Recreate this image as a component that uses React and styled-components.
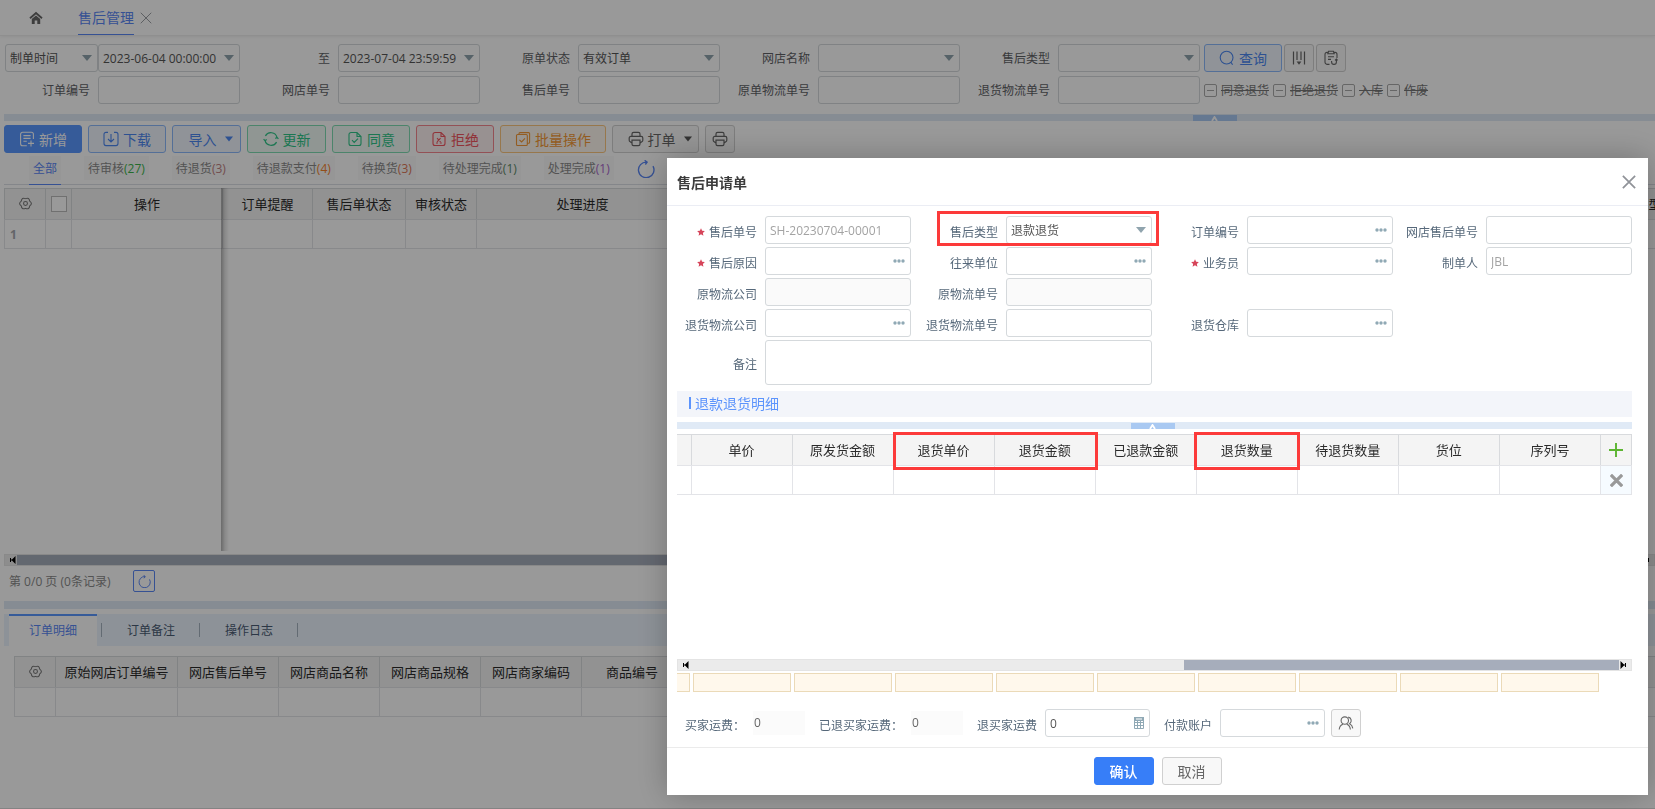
import React from 'react'
import styled, { createGlobalStyle, css } from 'styled-components'

const GlobalStyle = createGlobalStyle`
	* {
		box-sizing: border-box;
	}
	body {
		margin: 0;
		background: #fff;
		overflow: hidden;
	}
	body, button, input, select, textarea {
		font-family: 'Open Sans', 'Noto Sans CJK SC', sans-serif;
		font-size: 12px;
		color: #606266;
	}
	button {
		cursor: pointer;
	}
`

/* ---------- icons ---------- */

const Stroke = ({ size = 16, width = 1.1, children }) => (
  <svg width={size} height={size} viewBox='0 0 16 16' fill='none' stroke='currentColor' strokeWidth={width} aria-hidden='true'>
    {children}
  </svg>
)

const HomeIcon = () => (
  <svg width='14' height='14' viewBox='0 0 14 14' fill='none' aria-hidden='true'>
    <path d='M1 7.2L7 2l6 5.2' stroke='currentColor' strokeWidth='1.8' />
    <path d='M2.8 8L7 4.4 11.2 8v5H8.3V9.6H5.7V13H2.8z' fill='currentColor' />
  </svg>
)

const CloseIcon = ({ size = 12, width = 1.2 }) => (
  <Stroke size={size} width={width}><path d='M1 1l14 14M15 1L1 15' /></Stroke>
)

const AddIcon = () => (
  <Stroke>
    <path d='M14.4 8V3.2a2 2 0 0 0-2-2H3.6a2 2 0 0 0-2 2v9.6a2 2 0 0 0 2 2h4.2M4.4 4.6h7.2M4.4 7.4h7.2M4.4 10.2h3.4M12 9.4v6M9 12.4h6' />
  </Stroke>
)

const DownloadIcon = () => (
  <Stroke>
    <path d='M5 1.4H3a2 2 0 0 0-2 2v9.2a2 2 0 0 0 2 2h10a2 2 0 0 0 2-2V3.4a2 2 0 0 0-2-2h-2M8 3v8M5 8l3 3 3-3' />
  </Stroke>
)

const RenewIcon = () => (
  <Stroke width={1.2}>
    <path d='M2 9.5a6.3 6.3 0 0 0 11.6 1.6M14 6.5A6.3 6.3 0 0 0 2.4 4.9M.6 8.2L2 9.7l1.7-1.2M15.4 7.8L14 6.3l-1.7 1.2' />
  </Stroke>
)

const AgreeIcon = () => (
  <Stroke>
    <path d='M10 1.5H4a2 2 0 0 0-2 2v9a2 2 0 0 0 2 2h8a2 2 0 0 0 2-2v-7zM10 1.5v4h4M5 9.2l2.2 2.2L11 7.6' />
  </Stroke>
)

const RejectIcon = () => (
  <Stroke>
    <path d='M10 1.5H4a2 2 0 0 0-2 2v9a2 2 0 0 0 2 2h8a2 2 0 0 0 2-2v-7zM10 1.5v4h4M6 7.2l3.6 3.6M9.6 7.2L6 10.800M5 12h2M8.800 12h2' />
  </Stroke>
)

const BatchIcon = () => (
  <Stroke>
    <path d='M1.5 4.5a1 1 0 0 1 1-1h8.8a1 1 0 0 1 1 1v9a1 1 0 0 1-1 1H2.5a1 1 0 0 1-1-1zM4 3.5V2.6a1 1 0 0 1 1-1h8.6a1 1 0 0 1 1 1v8.6a1 1 0 0 1-1 1h-1.3M4.4 8.8l2.2 2.2L10 7.4' />
  </Stroke>
)

const PrintIcon = () => (
  <Stroke width={1.2}>
    <path d='M4 5.4V3a1.6 1.6 0 0 1 1.6-1.6h4.8A1.6 1.6 0 0 1 12 3v2.4M4 12l-1.800-1.200a2 2 0 0 1-1-1.600V7a1.600 1.600 0 0 1 1.600-1.600h10.400A1.600 1.600 0 0 1 14.800 7v2.200a2 2 0 0 1-1 1.600L12 12M4 9.200h8V13a1.600 1.600 0 0 1-1.600 1.600H5.600A1.600 1.600 0 0 1 4 13z' />
  </Stroke>
)

const SearchIcon = () => (
  <Stroke>
    <circle cx='7.6' cy='7.6' r='6.4' />
    <path d='M12 12.4l1.600 2.400' />
  </Stroke>
)

const ColumnsIcon = () => (
  <Stroke width={1.2}>
    <path d='M2.5 1.5v13M6 1.5V10M10 1.5V10M13.5 1.5v13' />
    <path d='M5.6 11.5h4.8L8 14.8z' fill='currentColor' stroke='none' />
  </Stroke>
)

const ClipboardIcon = () => (
  <Stroke>
    <path d='M5 2.4H4a2 2 0 0 0-2 2V12a2.400 2.400 0 0 0 2.400 2.400H6.500M11 2.400h1a2 2 0 0 1 2 2V8M5.600 1.300h4.800l.8 2.500H4.800zM5 6.800h6M5 9.400h3M13.400 9v3a2.400 2.400 0 0 1-4.800 0M8.600 12v-1M12 10.400L13.400 9l1.200 1.400' />
  </Stroke>
)

const ReloadIcon = ({ size = 16 }) => (
  <Stroke size={size} width={1.2}>
    <path d='M14.2 5.4A6.9 6.9 0 1 1 8.6 1.9M6.8.2l2.200 1.700L7.400 4' />
  </Stroke>
)

const GearIcon = () => (
  <Stroke size={13} width={1.3}>
    <path d='M13.2 5Q17.3 8 13.2 11 12.6 16 8 14 3.4 16 2.8 11-1.300 8 2.800 5 3.400 0 8 2 12.600 0 13.200 5z' />
    <circle cx='8' cy='8' r='2.4' />
  </Stroke>
)

const StarIcon = () => (
  <svg width='8' height='8' viewBox='0 0 16 16' aria-hidden='true'>
    <path fill='#d6455a' d='M8 .5l2.300 5 5.400.6-4 3.700 1.100 5.500L8 12.600l-4.800 2.700 1.100-5.500-4-3.700 5.400-.6z' />
  </svg>
)

const Triangle = ({ color = '#90a4ae', width = 10 }) => (
  <svg width={width} height='6' viewBox='0 0 10 6' aria-hidden='true'>
    <path fill={color} d='M0 0h10L5 6z' />
  </svg>
)

const DotsIcon = () => (
  <svg width='12' height='4' viewBox='0 0 12 4' fill='#90a9b5' aria-hidden='true'>
    <circle cx='2' cy='2' r='1.7' />
    <circle cx='6' cy='2' r='1.7' />
    <circle cx='10' cy='2' r='1.7' />
  </svg>
)

const CalcIcon = () => (
  <svg width='10' height='12' viewBox='0 0 10 12' fill='none' stroke='#90a9b5' aria-hidden='true'>
    <path d='M.5.5h9v11h-9zM.5 5.500h9M.5 8.500h9M3.500 4v7.500M6.500 4v7.500' />
    <path d='M0 0h10v4H0z' fill='#90a9b5' stroke='none' />
    <path d='M2 2h6' stroke='#fff' />
  </svg>
)

const UsersIcon = () => (
  <Stroke>
    <circle cx='6.8' cy='5.6' r='3.7' />
    <path d='M1.2 14.5c.3-3 2-4.600 3.700-5.200M8.800 9.300c1.700.6 3.300 2.200 3.600 5.200M10.200 2.100a3.700 3.700 0 0 1 1.400 6.700c1.800.8 2.900 2.600 3.200 4.600' />
  </Stroke>
)

const ArrowIcon = () => (
  <svg width='7' height='8' viewBox='0 0 7 8' aria-hidden='true'>
    <path d='M6.500 0v8L3 4.500H2V6H1V2h1v1.500h1z' fill='#000' />
  </svg>
)

const CaretUp = () => (
  <svg width='7' height='5' viewBox='0 0 7 5' fill='none' stroke='#fff' strokeWidth='1.8' aria-hidden='true'>
    <path d='M1 5l2.500-4L6 5' />
  </svg>
)

/* ---------- shared parts ---------- */

const controlStyle = css`
	display: block;
	width: 100%;
	height: 28px;
	padding: 0 4px;
	border: 1px solid #d5d9dc;
	border-radius: 3px;
	background: ${p => (p.$muted ? '#fafafa' : '#fff')};
	color: ${p => (p.readOnly ? '#a3a3a3' : '#555')};
	outline: none;
	appearance: none;
`

const Input = styled.input`
	${controlStyle}
`

const Select = styled.select`
	${controlStyle}
`

const TextArea = styled.textarea`
	${controlStyle}
	height: 45px;
	resize: none;
`

const Control = styled.div`
	position: relative;
	flex: none;
	width: ${p => p.$width || 146}px;
`

const Trailing = styled.span`
	position: absolute;
	top: 0;
	right: 6px;
	display: flex;
	align-items: center;
	height: 28px;
	pointer-events: none;
`

const Label = styled.label`
	display: flex;
	flex: 1;
	align-items: center;
	justify-content: flex-end;
	gap: 4px;
	padding: 3px 8px 0 0;
	white-space: nowrap;
	color: #56687a;
`

const FieldBox = styled.div`
	display: flex;
	min-width: 0;
`

const icons = { select: <Triangle />, date: <Triangle />, dots: <DotsIcon />, calc: <CalcIcon /> }

const FieldControl = ({ id, kind, value = '', width, muted, readOnly, label }) => (
  <Control $width={width}>
    {kind === 'select' ? (
      <Select id={id} aria-label={label} defaultValue={value}>
        <option>{value}</option>
      </Select>
    ) : (
      <Input id={id} aria-label={label} defaultValue={value} $muted={muted} readOnly={readOnly} />
    )}
    {icons[kind] && <Trailing>{icons[kind]}</Trailing>}
  </Control>
)

const Field = ({ id, label, required, ...rest }) => (
  <FieldBox>
    <Label htmlFor={id}>
      {required && <StarIcon />}
      {label}
    </Label>
    <FieldControl id={id} {...rest} />
  </FieldBox>
)

const tones = {
  solid: ['#fff', '#5a98ff', '#5a98ff'],
  blue: ['#4c87f2', '#8cbafc', '#f1f6fd'],
  green: ['#2fc689', '#7fdcb3', '#f0faf5'],
  red: ['#f25560', '#f58790', '#fdf2f2'],
  orange: ['#f59a37', '#fcc67f', '#fff9f0'],
  plain: ['#666', '#d0d0d0', '#f8f8f8'],
  primary: ['#fff', '#377ef8', '#377ef8']
}

const Button = styled.button`
	display: inline-flex;
	flex: none;
	align-items: center;
	justify-content: center;
	gap: 4px;
	width: ${p => p.$width}px;
	height: 28px;
	padding: 0 0 0 ${p => (p.$menu ? 8 : 0)}px;
	border: 1px solid ${p => tones[p.$tone][1]};
	border-radius: 3px;
	background: ${p => tones[p.$tone][2]};
	color: ${p => tones[p.$tone][0]};
	font-size: 14px;
	white-space: nowrap;
	font-weight: ${p => (p.$strong ? 500 : 400)};
`

const DropMark = styled.span`
	display: flex;
	margin-left: 4px;
`

const IconButton = styled.button`
	display: flex;
	align-items: center;
	justify-content: center;
	padding: 0;
	border: 0;
	background: none;
	color: ${p => p.$color || '#909399'};
`

const Splitter = styled.div`
	flex: none;
	height: ${p => p.$height || 7}px;
	margin-left: ${p => p.$inset || 0}px;
	padding-top: 1px;
	background: #e0eaf6;
`

const SplitHandle = styled.button`
	display: flex;
	align-items: flex-end;
	justify-content: center;
	width: 44px;
	height: 6px;
	margin-left: ${p => p.$at}%;
	padding: 0;
	border: 0;
	background: #a9c9f2;
`

const DataTable = styled.table`
	width: ${p => p.$width || '100%'};
	border-collapse: collapse;
	table-layout: fixed;
	th, td {
		padding: 0;
		border: 1px solid #e3e4e8;
		white-space: nowrap;
		overflow: hidden;
	}
	th {
		height: 31px;
		padding-bottom: 1px;
		border-color: #d8dadd;
		border-bottom-color: #e3e4e8;
		background: #f4f4f4;
		color: #2b2b2b;
		font-size: 13px;
		font-weight: 400;
	}
	th > *, td > * {
		margin: 0 auto;
	}
	th > svg {
		display: block;
		color: #777;
	}
	td {
		height: 29px;
	}
	.row-number {
		padding-left: 5px;
		color: #a5a8ad;
		font-weight: 700;
	}
	tr > :first-child {
		${p => p.$openLeft && 'border-left: 0;'}
	}
	.tool {
		background: #f6fbff;
	}
`

const ScrollTrack = styled.div`
	display: flex;
	flex: none;
	align-items: center;
	justify-content: space-between;
	height: 12px;
	margin-left: ${p => p.$inset || 0}px;
	padding: 1px 4px;
	background: #ebebeb;
	border: 1px solid #e4e4e4;
	overflow: hidden;
	svg {
		flex: none;
	}
	svg:last-child {
		transform: scaleX(-1);
	}
`

const ScrollThumb = styled.div`
	flex: none;
	width: ${p => p.$width};
	height: 10px;
	margin: ${p => (p.$start ? '0 auto 0 1px' : '0 1px 0 auto')};
	background: #a6adbb;
`

/* ---------- page behind the dialog ---------- */

const Page = styled.main`
	display: flex;
	flex-direction: column;
	height: 100vh;
	min-height: 700px;
	overflow: hidden;
	border-bottom: 1px solid #ddd;
`

const TopBar = styled.nav`
	display: flex;
	flex: none;
	align-items: center;
	gap: 35px;
	height: 36px;
	padding-left: 29px;
	border-bottom: 1px solid #eee;
	box-shadow: 0 1px 3px rgba(0, 0, 0, 0.06);
`

const PageTab = styled.div`
	display: flex;
	align-items: center;
	gap: 6px;
	a {
		height: 35px;
		border-bottom: 1px solid #5a87f5;
		color: #5a87f5;
		font-size: 14px;
		line-height: 35px;
		text-decoration: none;
	}
`

const Filters = styled.form`
	display: grid;
	flex: none;
	grid-template-columns: repeat(5, minmax(200px, 240px)) 1fr;
	row-gap: 4px;
	padding: 8px 0 10px;
	${Label} {
		padding-top: 0;
		color: #606266;
	}
`

const RangeField = styled.div`
	display: flex;
	padding-left: 5px;
`

const FilterActions = styled.div`
	display: flex;
	align-items: center;
	gap: ${p => p.$gap}px;
	padding-left: 4px;
`

const Excluded = styled.label`
	display: flex;
	align-items: center;
	gap: 4px;
	color: #777;
	text-decoration: line-through;
	white-space: nowrap;
	input {
		width: 13px;
		height: 13px;
		margin: 0;
		appearance: none;
		border: 1px solid #aaa;
		border-radius: 2px;
		background: linear-gradient(#aaa, #aaa) center / 7px 1px no-repeat;
	}
`

const Toolbar = styled.div`
	display: flex;
	flex: none;
	gap: 6px;
	padding: 4px 4px 0;
`

const StatusTabs = styled.div`
	display: flex;
	flex: none;
	align-items: center;
	gap: 23px;
	height: 32px;
	margin: 0 0 3px 4px;
	padding-left: 25px;
	border-bottom: 1px solid #dcdfe6;
`

const StatusTab = styled.button`
	height: 32px;
	padding: 0 4px;
	border: 0;
	border-bottom: 1px solid ${p => (p.$active ? '#5a87f5' : 'transparent')};
	background: linear-gradient(#fafafa, #fafafa) center / 100% 24px no-repeat;
	color: ${p => (p.$active ? '#5a87f5' : '#8a8a8a')};
	white-space: nowrap;
	span {
		color: ${p => p.$color};
	}
`

const GridPane = styled.section`
	position: relative;
	flex: ${p => (p.$grow ? 1 : 'none')};
	min-height: 0;
	height: ${p => p.$height || 'auto'};
	margin-left: ${p => p.$inset}px;
	overflow: hidden;
`

const FrozenShadow = styled.div`
	position: absolute;
	top: 0;
	bottom: 3px;
	left: 217px;
	width: 8px;
	background: linear-gradient(90deg, rgba(0, 0, 0, 0.3), rgba(0, 0, 0, 0.1) 50%, transparent);
`

const CheckBox = styled.input`
	display: block;
	width: 16px;
	height: 16px;
	appearance: none;
	border: 1px solid #bbb;
	background: #fff;
`

const Pager = styled.div`
	display: flex;
	flex: none;
	align-items: center;
	gap: 23px;
	height: 35px;
	padding: 0 9px 5px;
	color: #8a8a8a;
`

const ReloadButton = styled(IconButton)`
	width: 22px;
	height: 22px;
	border: 1px solid #5a87f5;
	border-radius: 2px;
`

const DetailTabs = styled.div`
	display: flex;
	flex: none;
	align-items: center;
	height: 32px;
	margin: 5px 0 10px 4px;
	padding-left: 5px;
	background: #ecf4fd;
`

const DetailTab = styled.button`
	width: 88px;
	height: 32px;
	padding: 0 0 2px;
	border: 0;
	border-top: 2px solid ${p => (p.$active ? '#5a98ff' : 'transparent')};
	background: ${p => (p.$active ? '#fff' : 'none')};
	color: ${p => (p.$active ? '#5a87f5' : '#4a5c74')};
`

const Divider = styled.span`
	width: 1px;
	height: 14px;
	margin: 0 5px 0 4px;
	background: #a6b2c0;
`

/* ---------- dialog ---------- */

const Mask = styled.div`
	position: fixed;
	inset: 0;
	display: flex;
	align-items: flex-start;
	justify-content: flex-end;
	padding: 158px 7px 14px;
	background: rgba(0, 0, 0, 0.4);
`

const Dialog = styled.section`
	width: calc(60vw - 12px);
	background: #fff;
	box-shadow: 0 0 30px rgba(0, 0, 0, 0.25);
`

const DialogHeader = styled.header`
	display: flex;
	align-items: center;
	justify-content: space-between;
	height: 48px;
	padding: 0 12px 0 10px;
	border-bottom: 1px solid #ebedf4;
	h2 {
		margin: 0;
		color: #3c3c3c;
		font-size: 14px;
		font-weight: 700;
	}
`

const DialogBody = styled.div`
	padding: 10px 16px 10px 10px;
`

const FormGrid = styled.div`
	display: grid;
	grid-template-columns: 234fr 241fr 241fr 239fr;
	gap: 3px 0;
`

const Remark = styled.div`
	display: flex;
	grid-column: 1 / 3;
	textarea {
		flex: none;
		width: calc(100% - 88px);
	}
`

const Spot = styled.div`
	position: relative;
	&::after {
		content: '';
		position: absolute;
		top: -5px;
		right: -7px;
		bottom: -2px;
		width: 216px;
		border: 3px solid #fc3a3a;
		pointer-events: none;
	}
`

const TableSpot = styled.div`
	position: absolute;
	top: -2px;
	left: ${p => p.$left}px;
	width: ${p => p.$width}px;
	height: 38px;
	border: 3px solid #fc3a3a;
	pointer-events: none;
`

const SectionTitle = styled.h3`
	display: flex;
	align-items: center;
	gap: 4px;
	height: 26px;
	margin: 6px 0 5px;
	padding: 0 0 2px 12px;
	background: #f3f5fa;
	color: #5c94fc;
	font-size: 14px;
	font-weight: 400;
	&::before {
		content: '';
		width: 2px;
		height: 12px;
		background: #5c94fc;
	}
`

const DetailPane = styled.div`
	position: relative;
	height: 225px;
	margin-top: 5px;
`

const SumRow = styled.div`
	display: grid;
	grid-template-columns: 13px repeat(9, 1fr) 30px;
	gap: 3px;
	margin-top: 2px;
	output {
		height: 19px;
		border: 1px solid #ebdab8;
		background: #fff8ec;
	}
	output:first-child {
		border-left: 0;
	}
`

const FeeRow = styled.div`
	display: flex;
	margin-top: 17px;
	padding-left: 8px;
	gap: 14px;
	label {
		flex: none;
	}
`

const FeeValue = styled.output`
	width: 52px;
	height: 24px;
	margin: 2px 0;
	padding-left: 1px;
	background: #fbfbfb;
	line-height: 24px;
	color: #666;
`

const AccountBox = styled.div`
	display: flex;
	gap: 6px;
`

const DialogFooter = styled.footer`
	display: flex;
	justify-content: center;
	gap: 8px;
	padding: 9px 0 10px;
	border-top: 1px solid #ebebeb;
`

const statusTabs = [
  ['待审核', 27, '#3bb54a'],
  ['待退货', 3, '#c08080'],
  ['待退款支付', 4, '#f5822a'],
  ['待换货', 3, '#dd7755'],
  ['待处理完成', 1, '#5a8a68'],
  ['处理完成', 1, '#a866cc']
]

const excluded = ['同意退货', '拒绝退货', '入库', '作废']

const orderColumns = [
  ['操作', 151], ['订单提醒', 90], ['售后单状态', 93], ['审核状态', 71], ['处理进度', 212],
  ['订单编号', 180], ['网店单号', 180], ['售后单号', 180], ['网店名称', 180], ['制单时间', 180], ['售后类型', 94]
]

const goodsColumns = ['网店售后单号', '网店商品名称', '网店商品规格', '网店商家编码', '商品编号', '商品名称', '商品规格', '单位', '数量', '单价', '金额', '退货数量', '退货金额']

const refundColumns = ['单价', '原发货金额', '退货单价', '退货金额', '已退款金额', '退货数量', '待退货数量', '货位', '序列号']

const FilterForm = () => (
  <Filters>
    <RangeField>
      <FieldControl kind='select' value='制单时间' width={93} label='时间类型' />
      <FieldControl kind='date' value='2023-06-04 00:00:00' width={142} label='开始时间' />
    </RangeField>
    <Field id='f-end' label='至' kind='date' value='2023-07-04 23:59:59' width={142} />
    <Field id='f-state' label='原单状态' kind='select' value='有效订单' width={142} />
    <Field id='f-shop' label='网店名称' kind='select' width={142} />
    <Field id='f-type' label='售后类型' kind='select' width={142} />
    <FilterActions $gap={2}>
      <Button type='button' $tone='blue' $width={78}><SearchIcon />查询</Button>
      <Button type='button' $tone='plain' $width={30} aria-label='列设置'><ColumnsIcon /></Button>
      <Button type='button' $tone='plain' $width={30} aria-label='方案'><ClipboardIcon /></Button>
    </FilterActions>
    <Field id='f-order' label='订单编号' width={142} />
    <Field id='f-shop-order' label='网店单号' width={142} />
    <Field id='f-after' label='售后单号' width={142} />
    <Field id='f-ship' label='原单物流单号' width={142} />
    <Field id='f-return' label='退货物流单号' width={142} />
    <FilterActions $gap={4}>
      {excluded.map(name => (
        <Excluded key={name}><input type='checkbox' />{name}</Excluded>
      ))}
    </FilterActions>
  </Filters>
)

const OrderPage = () => (
  <Page>
    <TopBar>
      <IconButton aria-label='首页' $color='#666'><HomeIcon /></IconButton>
      <PageTab>
        <a href='#after-sale'>售后管理</a>
        <IconButton aria-label='关闭标签'><CloseIcon /></IconButton>
      </PageTab>
    </TopBar>
    <FilterForm />
    <Splitter $inset={4}><SplitHandle $at={72} aria-label='收起筛选'><CaretUp /></SplitHandle></Splitter>
    <Toolbar>
      <Button $tone='solid' $width={78}><AddIcon />新增</Button>
      <Button $tone='blue' $width={78}><DownloadIcon />下载</Button>
      <Button $tone='blue' $width={69} $menu>导入<DropMark><Triangle color='#4c87f2' width={8} /></DropMark></Button>
      <Button $tone='green' $width={79}><RenewIcon />更新</Button>
      <Button $tone='green' $width={78}><AgreeIcon />同意</Button>
      <Button $tone='red' $width={78}><RejectIcon />拒绝</Button>
      <Button $tone='orange' $width={106}><BatchIcon />批量操作</Button>
      <Button $tone='plain' $width={87} $menu><PrintIcon />打单<DropMark><Triangle color='#555' width={8} /></DropMark></Button>
      <Button $tone='plain' $width={30} aria-label='打印'><PrintIcon /></Button>
    </Toolbar>
    <StatusTabs>
      <StatusTab $active>全部</StatusTab>
      {statusTabs.map(([name, count, color]) => (
        <StatusTab key={name} $color={color}>{name}<span>({count})</span></StatusTab>
      ))}
      <IconButton $color='#5a87f5' aria-label='刷新'><ReloadIcon size={18} /></IconButton>
    </StatusTabs>
    <GridPane $grow $inset={4}>
      <DataTable $width='1678px'>
        <colgroup>
          <col width='41' />
          <col width='26' />
          {orderColumns.map(([name, width]) => <col key={name} width={width} />)}
        </colgroup>
        <thead>
          <tr>
            <th><GearIcon /></th>
            <th><CheckBox type='checkbox' aria-label='全选' /></th>
            {orderColumns.map(([name]) => <th key={name}>{name}</th>)}
          </tr>
        </thead>
        <tbody>
          <tr>
            <td className='row-number'>1</td>
            <td />
            {orderColumns.map(([name]) => <td key={name} />)}
          </tr>
        </tbody>
      </DataTable>
      <FrozenShadow />
    </GridPane>
    <ScrollTrack $inset={4}>
      <ArrowIcon />
      <ScrollThumb $width='92%' $start />
      <ArrowIcon />
    </ScrollTrack>
    <Pager>
      第 0/0 页 (0条记录)
      <ReloadButton $color='#5a87f5' aria-label='重新加载'><ReloadIcon size={13} /></ReloadButton>
    </Pager>
    <Splitter $height={8} $inset={4} />
    <DetailTabs>
      <DetailTab $active>订单明细</DetailTab>
      <Divider />
      <DetailTab>订单备注</DetailTab>
      <Divider />
      <DetailTab>操作日志</DetailTab>
      <Divider />
    </DetailTabs>
    <GridPane $inset={14} $height='152px'>
      <DataTable $width='1678px'>
        <colgroup>
          <col width='41' />
          <col width='122' />
          {goodsColumns.slice(1).map(name => <col key={name} width='101' />)}
          <col />
        </colgroup>
        <thead>
          <tr>
            <th><GearIcon /></th>
            <th>原始网店订单编号</th>
            {goodsColumns.map(name => <th key={name}>{name}</th>)}
          </tr>
        </thead>
        <tbody>
          <tr>
            <td />
            <td />
            {goodsColumns.map(name => <td key={name} />)}
          </tr>
        </tbody>
      </DataTable>
    </GridPane>
  </Page>
)

const RequestForm = () => (
  <FormGrid>
    <Field id='no' label='售后单号' required value='SH-20230704-00001' readOnly />
    <Spot>
      <Field id='type' label='售后类型' kind='select' value='退款退货' />
    </Spot>
    <Field id='order' label='订单编号' kind='dots' />
    <Field id='shop-no' label='网店售后单号' />
    <Field id='reason' label='售后原因' required kind='dots' />
    <Field id='partner' label='往来单位' kind='dots' />
    <Field id='clerk' label='业务员' required kind='dots' />
    <Field id='maker' label='制单人' value='JBL' readOnly />
    <Field id='old-company' label='原物流公司' muted />
    <Field id='old-ship' label='原物流单号' muted />
    <span />
    <span />
    <Field id='back-company' label='退货物流公司' kind='dots' />
    <Field id='back-ship' label='退货物流单号' />
    <Field id='back-store' label='退货仓库' kind='dots' />
    <span />
    <Remark>
      <Label htmlFor='remark'>备注</Label>
      <TextArea id='remark' />
    </Remark>
  </FormGrid>
)

const RefundTable = () => (
  <DetailPane>
    <DataTable $openLeft>
      <colgroup>
        <col width='14' />
        {refundColumns.map(name => <col key={name} />)}
        <col width='31' />
      </colgroup>
      <thead>
        <tr>
          <th />
          {refundColumns.map(name => <th key={name}>{name}</th>)}
          <th>
            <IconButton $color='#5cb531' aria-label='添加行'>
              <Stroke size={14} width={2.2}><path d='M8 0v16M0 8h16' /></Stroke>
            </IconButton>
          </th>
        </tr>
      </thead>
      <tbody>
        <tr>
          <td />
          {refundColumns.map(name => <td key={name} />)}
          <td className='tool'>
            <IconButton $color='#999' aria-label='删除行'><CloseIcon size={13} width={4} /></IconButton>
          </td>
        </tr>
      </tbody>
    </DataTable>
    <TableSpot $left={216} $width={205} />
    <TableSpot $left={517} $width={106} />
  </DetailPane>
)

const RequestDialog = () => (
  <Mask>
    <Dialog role='dialog' aria-labelledby='dialog-title'>
      <DialogHeader>
        <h2 id='dialog-title'>售后申请单</h2>
        <IconButton aria-label='关闭'><CloseIcon size={14} width={2} /></IconButton>
      </DialogHeader>
      <DialogBody>
        <RequestForm />
        <SectionTitle>退款退货明细</SectionTitle>
        <Splitter><SplitHandle $at={47.5} aria-label='收起表单'><CaretUp /></SplitHandle></Splitter>
        <RefundTable />
        <ScrollTrack>
          <ArrowIcon />
          <ScrollThumb $width='46%' />
          <ArrowIcon />
        </ScrollTrack>
        <SumRow>
          <output />
          {refundColumns.map(name => <output key={name} />)}
        </SumRow>
        <FeeRow>
          <FieldBox>
            <Label htmlFor='fee'>买家运费：</Label>
            <FeeValue id='fee'>0</FeeValue>
          </FieldBox>
          <FieldBox>
            <Label htmlFor='fee-back'>已退买家运费：</Label>
            <FeeValue id='fee-back'>0</FeeValue>
          </FieldBox>
          <Field id='fee-refund' label='退买家运费' kind='calc' value='0' width={105} />
          <AccountBox>
            <Field id='account' label='付款账户' kind='dots' width={105} />
            <Button $tone='plain' $width={30} aria-label='选择账户'><UsersIcon /></Button>
          </AccountBox>
        </FeeRow>
      </DialogBody>
      <DialogFooter>
        <Button $tone='primary' $width={60} $strong>确认</Button>
        <Button $tone='plain' $width={60}>取消</Button>
      </DialogFooter>
    </Dialog>
  </Mask>
)

const App = () => (
  <>
    <GlobalStyle />
    <OrderPage />
    <RequestDialog />
  </>
)

export default App
